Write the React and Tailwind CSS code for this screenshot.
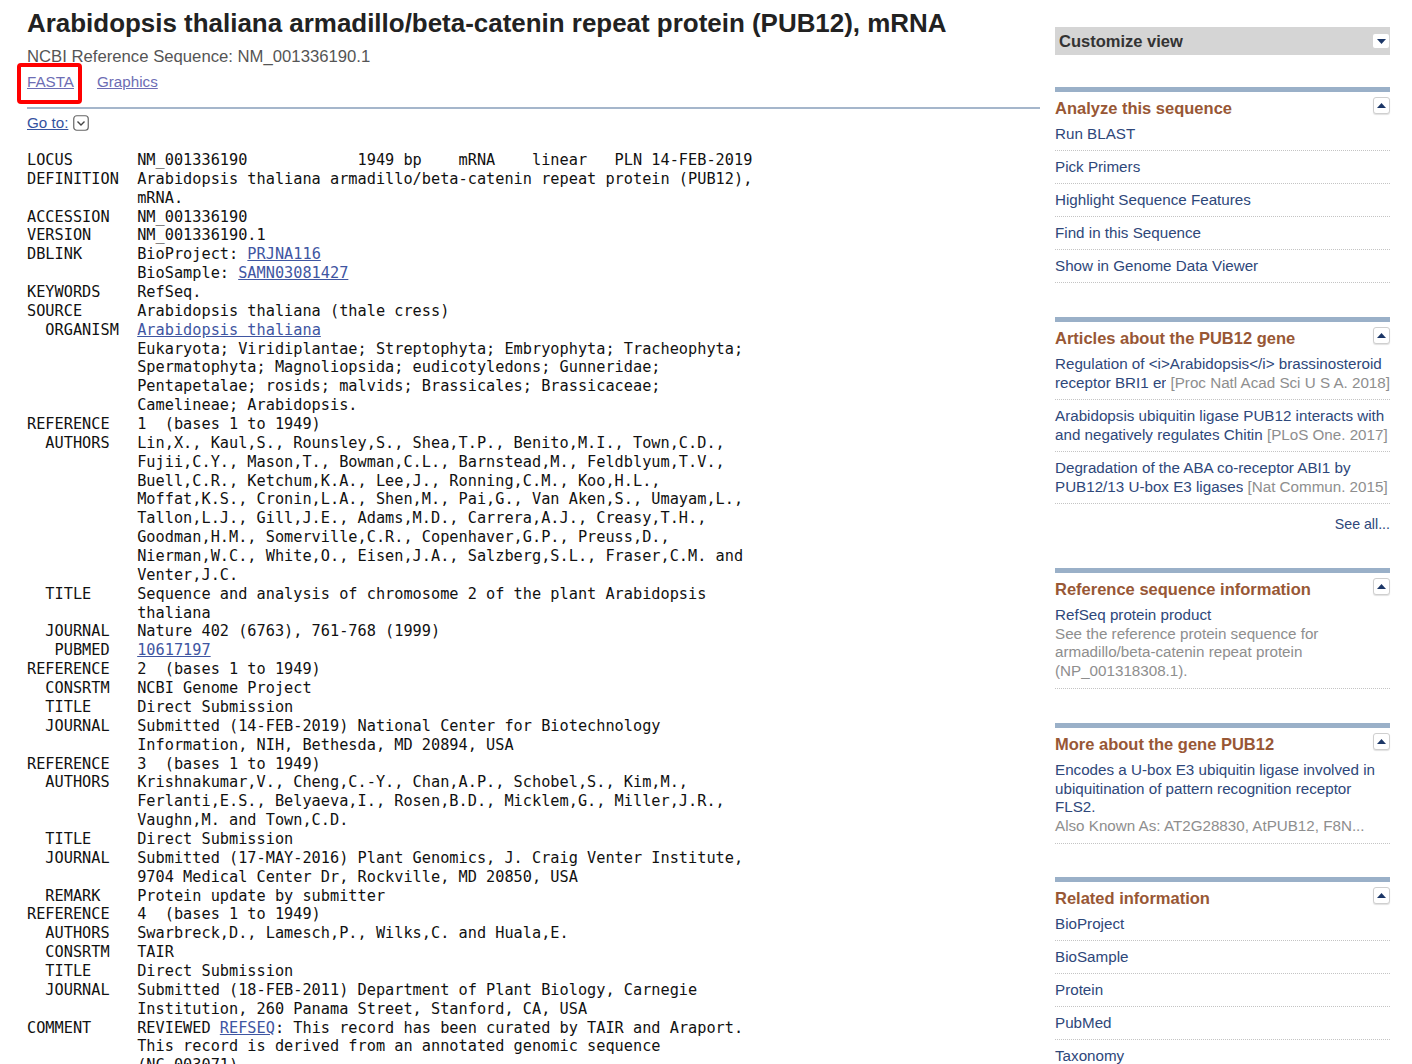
import React from 'react'

const mono = { fontFamily: '"DejaVu Sans Mono", monospace' }

// GenBank flat file, one entry per line; objects are links
const record = [
  'LOCUS       NM_001336190            1949 bp    mRNA    linear   PLN 14-FEB-2019',
  'DEFINITION  Arabidopsis thaliana armadillo/beta-catenin repeat protein (PUB12),',
  '            mRNA.',
  'ACCESSION   NM_001336190',
  'VERSION     NM_001336190.1',
  ['DBLINK      BioProject: ', { a: 'PRJNA116' }],
  ['            BioSample: ', { a: 'SAMN03081427' }],
  'KEYWORDS    RefSeq.',
  'SOURCE      Arabidopsis thaliana (thale cress)',
  ['  ORGANISM  ', { a: 'Arabidopsis thaliana' }],
  '            Eukaryota; Viridiplantae; Streptophyta; Embryophyta; Tracheophyta;',
  '            Spermatophyta; Magnoliopsida; eudicotyledons; Gunneridae;',
  '            Pentapetalae; rosids; malvids; Brassicales; Brassicaceae;',
  '            Camelineae; Arabidopsis.',
  'REFERENCE   1  (bases 1 to 1949)',
  '  AUTHORS   Lin,X., Kaul,S., Rounsley,S., Shea,T.P., Benito,M.I., Town,C.D.,',
  '            Fujii,C.Y., Mason,T., Bowman,C.L., Barnstead,M., Feldblyum,T.V.,',
  '            Buell,C.R., Ketchum,K.A., Lee,J., Ronning,C.M., Koo,H.L.,',
  '            Moffat,K.S., Cronin,L.A., Shen,M., Pai,G., Van Aken,S., Umayam,L.,',
  '            Tallon,L.J., Gill,J.E., Adams,M.D., Carrera,A.J., Creasy,T.H.,',
  '            Goodman,H.M., Somerville,C.R., Copenhaver,G.P., Preuss,D.,',
  '            Nierman,W.C., White,O., Eisen,J.A., Salzberg,S.L., Fraser,C.M. and',
  '            Venter,J.C.',
  '  TITLE     Sequence and analysis of chromosome 2 of the plant Arabidopsis',
  '            thaliana',
  '  JOURNAL   Nature 402 (6763), 761-768 (1999)',
  ['   PUBMED   ', { a: '10617197' }],
  'REFERENCE   2  (bases 1 to 1949)',
  '  CONSRTM   NCBI Genome Project',
  '  TITLE     Direct Submission',
  '  JOURNAL   Submitted (14-FEB-2019) National Center for Biotechnology',
  '            Information, NIH, Bethesda, MD 20894, USA',
  'REFERENCE   3  (bases 1 to 1949)',
  '  AUTHORS   Krishnakumar,V., Cheng,C.-Y., Chan,A.P., Schobel,S., Kim,M.,',
  '            Ferlanti,E.S., Belyaeva,I., Rosen,B.D., Micklem,G., Miller,J.R.,',
  '            Vaughn,M. and Town,C.D.',
  '  TITLE     Direct Submission',
  '  JOURNAL   Submitted (17-MAY-2016) Plant Genomics, J. Craig Venter Institute,',
  '            9704 Medical Center Dr, Rockville, MD 20850, USA',
  '  REMARK    Protein update by submitter',
  'REFERENCE   4  (bases 1 to 1949)',
  '  AUTHORS   Swarbreck,D., Lamesch,P., Wilks,C. and Huala,E.',
  '  CONSRTM   TAIR',
  '  TITLE     Direct Submission',
  '  JOURNAL   Submitted (18-FEB-2011) Department of Plant Biology, Carnegie',
  '            Institution, 260 Panama Street, Stanford, CA, USA',
  ['COMMENT     REVIEWED ', { a: 'REFSEQ' }, ': This record has been curated by TAIR and Araport.'],
  '            This record is derived from an annotated genomic sequence',
  '            (NC_003071).',
  '            ',
]

function RecordLine({ line }) {
  const parts = Array.isArray(line) ? line : [line]
  return (
    <div className="h-[18.86px]">
      {parts.map((p, i) =>
        typeof p === 'string'
          ? <span key={i}>{p}</span>
          : <a key={i} href="#" className="text-[#3f56a2] underline">{p.a}</a>
      )}
    </div>
  )
}

function Toggle({ up }) {
  return (
    <span className="flex items-center justify-center w-[17px] h-[17px] bg-white border border-[#cfcfcf] rounded-[3px] shadow-[0_1px_1px_rgba(0,0,0,0.12)]">
      <svg width="9" height="5" viewBox="0 0 9 5">
        {up ? <path d="M0 5 L4.5 0 L9 5 Z" fill="#1c3767" /> : <path d="M0 0 L4.5 5 L9 0 Z" fill="#1c3767" />}
      </svg>
    </span>
  )
}

function Section({ title, children }) {
  return (
    <div className="mt-[34px] border-t-[5px] border-[#9ab0c8]">
      <div className="flex items-start justify-between">
        <h3 className="mt-[7px] text-[16.5px] leading-[19px] font-bold text-[#985735]">{title}</h3>
        <span className="mt-[5px]"><Toggle up /></span>
      </div>
      {children}
    </div>
  )
}

function LinkList({ items }) {
  return (
    <ul>
      {items.map(t => (
        <li key={t} className="pt-[6px] pb-[7px] border-b border-dotted border-[#c4c4c4] leading-[19px]">
          <a href="#" className="text-[#2e477a]">{t}</a>
        </li>
      ))}
    </ul>
  )
}

const articles = [
  ['Regulation of <i>Arabidopsis</i> brassinosteroid', 'receptor BRI1 endocytosis and degradation by plant U-box PUB12/PUB13-mediated ubiquitination', 'Proc Natl Acad Sci U S A. 2018'],
  ['Arabidopsis ubiquitin ligase PUB12 interacts with', 'and negatively regulates Chitin', 'PLoS One. 2017'],
  ['Degradation of the ABA co-receptor ABI1 by', 'PUB12/13 U-box E3 ligases', 'Nat Commun. 2015'],
]

export default function App() {
  return (
    <div className="flex bg-white text-[#222]" style={{ fontFamily: '"Liberation Sans", Arial, sans-serif' }}>
      <div className="w-[1040px] shrink-0 pl-[27px] pt-[8px]">
        <h1 className="text-[25.95px] leading-[30px] font-bold text-[#222] whitespace-nowrap">
          Arabidopsis thaliana armadillo/beta-catenin repeat protein (PUB12), mRNA
        </h1>
        <p className="mt-[9px] text-[16.7px] leading-[20px] text-[#555]">NCBI Reference Sequence: NM_001336190.1</p>
        <div className="mt-[6px] flex gap-[23px] text-[15.2px] leading-[18px]">
          <a href="#" className="relative text-[#6d6db4] underline">
            FASTA
            <span className="absolute left-[-10px] top-[-10px] w-[65px] h-[41px] border-[4px] border-[#f00] rounded-[4px]" />
          </a>
          <a href="#" className="text-[#6d6db4] underline">Graphics</a>
        </div>
        <div className="mt-[16px] h-[2px] bg-[#a5b6cb]" />
        <div className="mt-[5px] flex items-center gap-[5px] text-[15.2px] leading-[18px]">
          <a href="#" className="text-[#3553a0] underline">Go to:</a>
          <svg width="16" height="16" viewBox="0 0 16 16">
            <rect x="0.75" y="0.75" width="14.5" height="14.5" rx="3" fill="white" stroke="#666" strokeWidth="1.2" />
            <path d="M4.5 6.5 L8 10 L11.5 6.5" fill="none" stroke="#444" strokeWidth="1.4" />
          </svg>
        </div>
        <div className="mt-[19px] whitespace-pre text-[15.25px] leading-[18.86px] text-[#111]" style={mono}>
          {record.map((l, i) => <RecordLine key={i} line={l} />)}
        </div>
      </div>

      <aside className="ml-[15px] w-[335px] shrink-0 text-[15.2px]">
        <div className="mt-[27px] h-[28px] bg-[#d5d5d5] flex items-center justify-between pl-[4px] pr-[1px]">
          <span className="text-[16.5px] font-bold text-[#333]">Customize view</span>
          <span className="flex items-center justify-center w-[16px] h-[14px] bg-white rounded-[2px]">
            <svg width="9" height="5" viewBox="0 0 9 5"><path d="M0 0 L4.5 5 L9 0 Z" fill="#1c3767" /></svg>
          </span>
        </div>

        <div className="mt-[-2px]">
          <Section title="Analyze this sequence">
            <LinkList items={['Run BLAST', 'Pick Primers', 'Highlight Sequence Features', 'Find in this Sequence', 'Show in Genome Data Viewer']} />
          </Section>
        </div>

        <Section title="Articles about the PUB12 gene">
          <ul>
            {articles.map(([l1, l2, j]) => (
              <li key={j} className="pt-[6px] pb-[7px] border-b border-dotted border-[#c4c4c4] leading-[19px]">
                <a href="#" className="block text-[#2e477a] whitespace-nowrap">{l1}</a>
                <div className="flex whitespace-nowrap">
                  <a href="#" className="min-w-0 overflow-hidden text-[#2e477a]">{l2}</a>
                  <span className="shrink-0 text-[#8e8e8e]">&nbsp;[{j}]</span>
                </div>
              </li>
            ))}
          </ul>
          <div className="pt-[11px] text-right text-[14.2px] leading-[19px]">
            <a href="#" className="text-[#2e477a]">See all...</a>
          </div>
        </Section>

        <div className="mt-[1px]">
          <Section title="Reference sequence information">
            <div className="pt-[7px] pb-[7px] border-b border-dotted border-[#c4c4c4] leading-[18.7px]">
              <a href="#" className="block text-[#2e477a]">RefSeq protein product</a>
              <p className="text-[#8e8e8e]">
                See the reference protein sequence for<br />
                armadillo/beta-catenin repeat protein<br />
                (NP_001318308.1).
              </p>
            </div>
          </Section>
        </div>

        <Section title="More about the gene PUB12">
          <div className="pt-[7px] pb-[7px] border-b border-dotted border-[#c4c4c4] leading-[18.7px]">
            <a href="#" className="block text-[#2e477a]">
              Encodes a U-box E3 ubiquitin ligase involved in<br />
              ubiquitination of pattern recognition receptor<br />
              FLS2.
            </a>
            <p className="text-[#8e8e8e]">Also Known As: AT2G28830, AtPUB12, F8N...</p>
          </div>
        </Section>

        <div className="mt-[-1px]">
          <Section title="Related information">
            <LinkList items={['BioProject', 'BioSample', 'Protein', 'PubMed', 'Taxonomy']} />
          </Section>
        </div>
      </aside>
    </div>
  )
}
